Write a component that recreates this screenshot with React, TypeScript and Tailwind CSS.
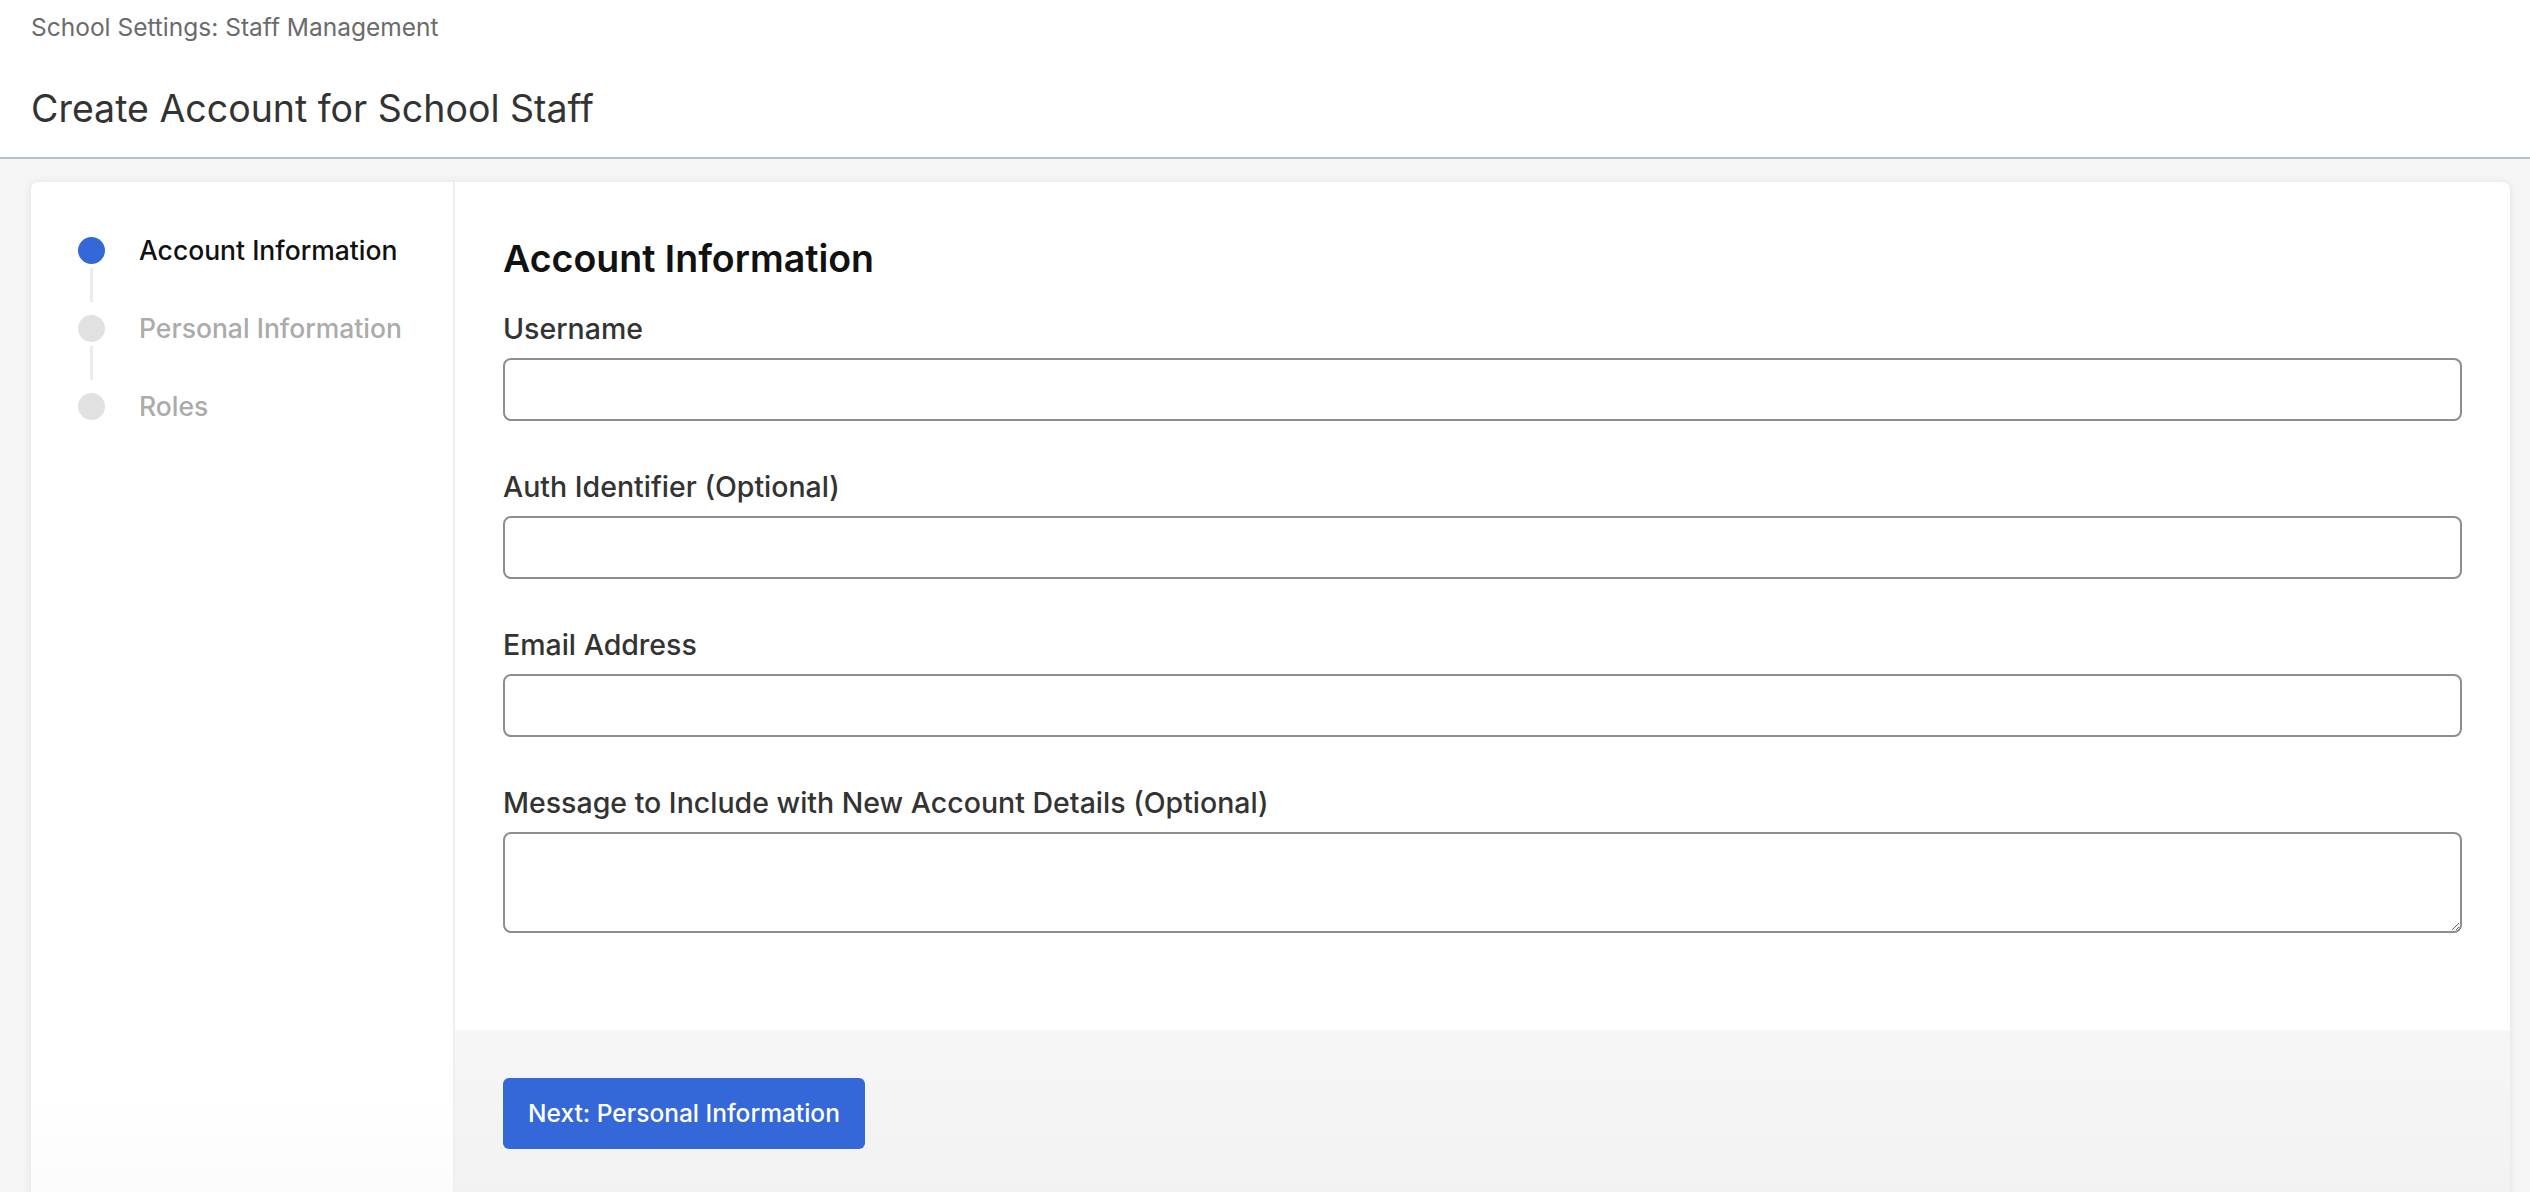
const steps = [
  { label: "Account Information", active: true },
  { label: "Personal Information", active: false },
  { label: "Roles", active: false },
];

const fields = [
  { id: "username", label: "Username" },
  { id: "auth-identifier", label: "Auth Identifier (Optional)" },
  { id: "email", label: "Email Address" },
];

const StepList = () => (
  <div className="flex flex-col pt-[50px] pl-[47px]">
    {steps.map((step, index) => (
      <div key={step.label}>
        <div className="flex items-center h-[36px] gap-[34px]">
          <span
            className={`block w-[27px] h-[27px] rounded-full shrink-0 ${
              step.active ? "bg-[#3468d8]" : "bg-[#e1e1e1]"
            }`}
          />
          <span
            className={`text-[26.5px] leading-[36px] font-medium whitespace-nowrap ${
              step.active ? "text-[#111111]" : "text-[#ababab]"
            }`}
          >
            {step.label}
          </span>
        </div>
        {/* connector between steps */}
        {index < steps.length - 1 && (
          <div className="h-[42px] w-[27px] flex justify-center">
            <span className="block w-[3px] h-[34px] bg-[#ececec]" />
          </div>
        )}
      </div>
    ))}
  </div>
);

export default function App() {
  return (
    <div className="min-h-screen bg-[#f5f5f5] font-['Inter','Liberation_Sans',sans-serif] overflow-hidden">
      {/* Page header */}
      <header className="bg-white px-[31px] pt-[9px] pb-[25px] border-b-2 border-[#b7c0c9]">
        <div className="text-[24.5px] leading-[36px] text-[#6b6b6b]">
          School Settings: Staff Management
        </div>
        <h1 className="mt-[41px] text-[37.5px] leading-[46px] font-normal text-[#333333]">
          Create Account for School Staff
        </h1>
      </header>

      <div className="pt-[23px] pl-[31px] pr-[20px]">
        <div className="flex bg-white rounded-[8px] shadow-[0_1px_8px_rgba(0,0,0,0.09)] overflow-hidden">
          {/* Steps sidebar */}
          <aside className="w-[424px] shrink-0 border-r-2 border-[#efefef] bg-gradient-to-b from-white from-90% to-[#fbfbfb]">
            <StepList />
          </aside>

          {/* Form */}
          <main className="flex-1 flex flex-col">
            <div className="pt-[54px] pb-[97px] px-[48px]">
              <h2 className="text-[37.5px] leading-[45px] font-semibold text-[#111111]">
                Account Information
              </h2>
              <div className="mt-[30px] flex flex-col gap-[48px]">
                {fields.map((field) => (
                  <div key={field.id} className="flex flex-col gap-[11px]">
                    <label
                      htmlFor={field.id}
                      className="text-[28.5px] leading-[36px] font-medium text-[#333333]"
                    >
                      {field.label}
                    </label>
                    <input
                      id={field.id}
                      type="text"
                      className="h-[63px] w-full rounded-[8px] border-2 border-[#8e8e8e] bg-white px-4 text-[26px] focus:outline-none"
                    />
                  </div>
                ))}
                <div className="flex flex-col gap-[11px]">
                  <label
                    htmlFor="message"
                    className="text-[28.5px] leading-[36px] font-medium text-[#333333]"
                  >
                    Message to Include with New Account Details (Optional)
                  </label>
                  <textarea
                    id="message"
                    className="block h-[101px] w-full rounded-[8px] border-2 border-[#8e8e8e] bg-white px-4 py-2 text-[26px] focus:outline-none"
                  />
                </div>
              </div>
            </div>

            <div className="bg-gradient-to-b from-[#f6f6f6] to-[#f2f2f2] pt-[48px] pb-[48px] px-[48px]">
              <button
                type="button"
                className="h-[71px] px-[25px] rounded-[6px] bg-[#3468d8] text-white text-[24.5px] font-medium"
              >
                Next: Personal Information
              </button>
            </div>
          </main>
        </div>
      </div>
    </div>
  );
}
